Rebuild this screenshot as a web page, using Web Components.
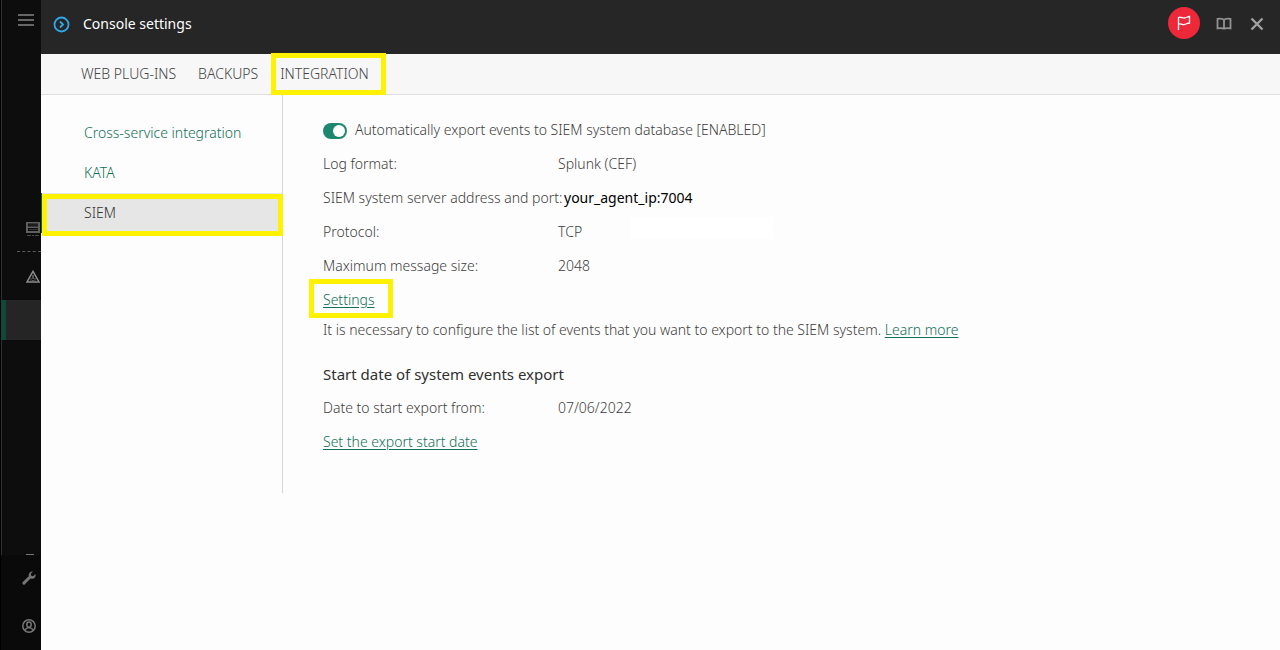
<!DOCTYPE html>
<html lang="en">
<head>
<meta charset="utf-8">
<meta name="viewport" content="width=device-width, initial-scale=1">
<title>Console settings</title>
<style>
  body { margin: 0; background: #fdfdfd; color: #3d3d3d; font: 300 14px/20px "Noto Sans", "Open Sans", sans-serif; }
</style>
</head>
<body>
<console-app>
  <side-rail slot="rail"></side-rail>
  <panel-header slot="header" heading="Console settings"></panel-header>
  <tab-bar slot="tabs">
    <tab-link>WEB PLUG-INS</tab-link>
    <tab-link>BACKUPS</tab-link>
    <tab-link marked>INTEGRATION</tab-link>
  </tab-bar>
  <section-nav slot="nav">
    <nav-item>Cross-service integration</nav-item>
    <nav-item>KATA</nav-item>
    <nav-item active>SIEM</nav-item>
  </section-nav>
  <siem-settings></siem-settings>
</console-app>

<script>
const define = (name, html, setup) => customElements.define(name, class extends HTMLElement {
  constructor() {
    super();
    this.attachShadow({ mode: "open" }).innerHTML = html;
  }
  connectedCallback() { if (setup) setup(this, this.shadowRoot); }
});

define("console-app", `
<style>
  :host { display: grid; grid-template-columns: 41px minmax(0, 1fr); min-height: 100vh; }
  .page { display: flex; flex-direction: column; min-width: 0; }
  .body { display: grid; grid-template-columns: 242px minmax(0, 1fr); align-items: start; }
</style>
<slot name="rail"></slot>
<div class="page">
  <slot name="header"></slot>
  <slot name="tabs"></slot>
  <div class="body"><slot name="nav"></slot><main><slot></slot></main></div>
</div>`);

define("side-rail", `
<style>
  :host { display: flex; flex-direction: column; box-sizing: border-box; background: #0d0d0d; border-left: 1px solid #000; box-shadow: inset 1px 0 #303030; overflow: hidden; }
  button { display: flex; flex: none; align-items: center; justify-content: flex-end; width: 100%; height: 40px; padding: 0 1px 0 0; border: 0; background: none; }
  svg { display: block; fill: none; stroke: #757575; }
  .menu { padding-right: 7px; }
  .menu svg { stroke: #666; }
  .servers { margin-top: 167px; height: 44px; }
  hr { width: 24px; margin: 0 0 0 auto; border: 0; border-top: 1px dashed #5c5c5c; }
  .alerts { height: 48px; }
  .current { background: #252525; border-left: 5px solid #12483a; }
  .fill { flex: 1; }
  .more { width: 8px; height: 1px; margin: 0 7px 0 auto; background: #777; }
  .foot { background: #0a0a0a; padding-bottom: 1px; }
  .foot button { height: 46px; padding-right: 5px; }
  .foot button + button { height: 48px; padding-top: 2px; }
</style>
<button class="menu" aria-label="Menu"><svg width="16" height="12" stroke-width="2"><path d="M0 1h16M0 6h16M0 11h16"/></svg></button>
<button class="servers" aria-label="Servers"><svg width="14" height="14"><path fill="#606060" stroke="none" fill-rule="evenodd" d="M0 0h14v11H0zM2 1.500v3h10v-3zM2 6v3h10V6z"/><path d="M3 3h9M3 7.500h9" stroke="#333"/><path d="M1 13.500h4m1 0h2m1 0h4" stroke="#4b4b4b"/></svg></button>
<hr>
<button class="alerts" aria-label="Alerts"><svg width="14" height="13"><path stroke="#8c8c8c" stroke-width="1.500" d="M7 1.300 13 12H1z"/><path d="M7 5v4m0 1v1" stroke="#999"/><path d="M5 8v3m4-3v3" stroke="#555"/></svg></button>
<button class="current" aria-label="Current section"></button>
<div class="fill"></div>
<div class="more"></div>
<div class="foot">
<button aria-label="Console settings"><svg width="14" height="14" viewBox="0 0 14 14"><path d="M1.900 12.100 7.200 6.800" stroke-width="3" stroke-linecap="round"/><path d="M11 .6 8.800 2.800l.4 2 2 .4 2.200-2.200c.7 2-.2 4.200-2.400 4.700-2.200.5-4.500-1.200-4.300-3.600C6.900 1.400 9 .1 11 .6z" fill="#757575" stroke="none"/></svg></button>
<button aria-label="Account"><svg width="14" height="14" viewBox="0 0 14 14" stroke-width="1.500"><circle cx="7" cy="7" r="6.200"/><ellipse cx="7" cy="5.600" rx="2.200" ry="2.600"/><path d="M3 11.500c.5-2 1.600-2.300 2.700-2.700h2.600c1.100.4 2.200.7 2.700 2.700"/></svg></button>
</div>`);

define("panel-header", `
<style>
  :host { display: flex; align-items: center; height: 54px; box-sizing: border-box; padding: 0 14px 6px 12px; background: #262626; color: #fff; }
  h1 { margin: 0 auto 0 13px; font-size: 14px; line-height: 20px; font-weight: 400; }
  svg { display: block; fill: none; }
  button { display: grid; place-items: center; padding: 0; border: 0; background: none; width: 18px; height: 32px; }
  .flag { width: 32px; border-radius: 50%; background: #ed2939; margin: 0 15px 2px 0; }
  .book { margin-right: 15px; }
</style>
<svg width="17" height="17" viewBox="0 0 17 17" stroke="#2fa8ea"><circle cx="8.500" cy="8.500" r="7" stroke-width="1.800"/><path d="m7 5.500 3 3-3 3" stroke-width="1.800"/></svg>
<h1></h1>
<button class="flag" aria-label="Notifications"><svg width="14" height="16" viewBox="0 0 14 16" stroke="#fff" stroke-width="1.300"><path d="M1.500 15V2.500c3-1 4 1 6 .5s3.500-1.500 5-1.500v6.500c-2 0-3 1-5 1.500s-3-1.200-6-.4"/></svg></button>
<button class="book" aria-label="Help"><svg width="16" height="14" viewBox="0 0 16 14" stroke="#929292" stroke-width="1.800"><path d="M8 2.900C7 1.600 4 1.500 1.500 1.900v9.500c2.500-.3 5-.3 6.500.4 1.500-.7 4-.7 6.500-.4V1.900C12 1.500 9 1.600 8 2.900zM8 2.500v9.500"/></svg></button>
<button class="close" aria-label="Close"><svg width="14" height="14" viewBox="0 0 14 14" stroke="#a0a0a0" stroke-width="2.400"><path d="m1.500 1.500 11 11m0-11-11 11"/></svg></button>`,
(el, root) => { root.querySelector("h1").textContent = el.getAttribute("heading"); });

define("tab-bar", `
<style>
  :host { display: block; height: 40px; background: #f7f7f7; border-bottom: 1px solid #dedede; }
  nav { display: flex; gap: 22px; height: 100%; padding-left: 40px; }
</style>
<nav><slot></slot></nav>`);

define("tab-link", `
<style>
  :host { display: flex; align-items: center; position: relative; }
  a { color: #444; text-decoration: none; white-space: nowrap; }
  :host([marked])::after { content: ""; position: absolute; inset: -1px -17px -1px -9px; border: 5px solid #fff200; pointer-events: none; }
</style>
<a href="#"><slot></slot></a>`);

define("section-nav", `
<style>
  :host { display: block; box-sizing: border-box; min-height: 398px; padding-top: 18px; border-right: 1px solid #d5d5d5; }
</style>
<nav><slot></slot></nav>`);

define("nav-item", `
<style>
  :host { display: block; position: relative; }
  a { display: block; padding: 10px 0 10px 43px; color: #117058; text-decoration: none; }
  :host([active]) a { background: #e6e6e6; color: #333; box-shadow: inset 1px 0 #12614d; }
  :host([active])::after { content: ""; position: absolute; inset: 1px -1px -3px 1px; border: 5px solid #fff200; pointer-events: none; }
</style>
<a href="#"><slot></slot></a>`);

define("setting-row", `
<style>
  :host { display: grid; grid-template-columns: 235px auto; justify-content: start; height: 34px; white-space: nowrap; }
</style>
<span><slot name="label"></slot></span><span><slot></slot></span>`);

define("siem-settings", `
<style>
  :host { display: block; padding: 25px 40px 40px; }
  .toggle { display: flex; align-items: center; gap: 8px; height: 20px; margin-bottom: 14px; }
  input { appearance: none; box-sizing: border-box; width: 24px; height: 16px; margin: 2px 0 0; padding: 2px; border-radius: 8px; background: #1d866f; display: flex; }
  input::before { content: ""; width: 12px; height: 12px; border-radius: 50%; background: #fff; }
  input:checked { justify-content: flex-end; }
  a { color: #117058; text-decoration: underline; text-underline-offset: 2px; }
  .address { padding-left: 6px; color: #000; font: 400 14px/20px "Noto Sans", sans-serif; }
  .settings { position: relative; display: inline-block; }
  .settings::after { content: ""; position: absolute; inset: -11px -19px -8px -14px; border: 5px solid #fff200; pointer-events: none; }
  p { margin: 10px 0 24px; }
  h2 { margin: 0 0 14px; font-size: 15px; line-height: 20px; font-weight: 400; color: #303030; }
  .blank { display: inline-block; vertical-align: top; width: 143px; height: 22px; margin: -5px 0 0 48px; background: #fff; }
</style>
<div class="toggle"><input id="auto" type="checkbox" role="switch" checked><label for="auto">Automatically export events to SIEM system database [ENABLED]</label></div>
<setting-row><span slot="label">Log format:</span>Splunk (CEF)</setting-row>
<setting-row><span slot="label">SIEM system server address and port:</span><span class="address">your_agent_ip:7004</span></setting-row>
<setting-row><span slot="label">Protocol:</span>TCP<span class="blank"></span></setting-row>
<setting-row><span slot="label">Maximum message size:</span>2048</setting-row>
<a class="settings" href="#">Settings</a>
<p>It is necessary to configure the list of events that you want to export to the SIEM system. <a href="#">Learn more</a></p>
<h2>Start date of system events export</h2>
<setting-row><span slot="label">Date to start export from:</span>07/06/2022</setting-row>
<a href="#">Set the export start date</a>`);
</script>
</body>
</html>
